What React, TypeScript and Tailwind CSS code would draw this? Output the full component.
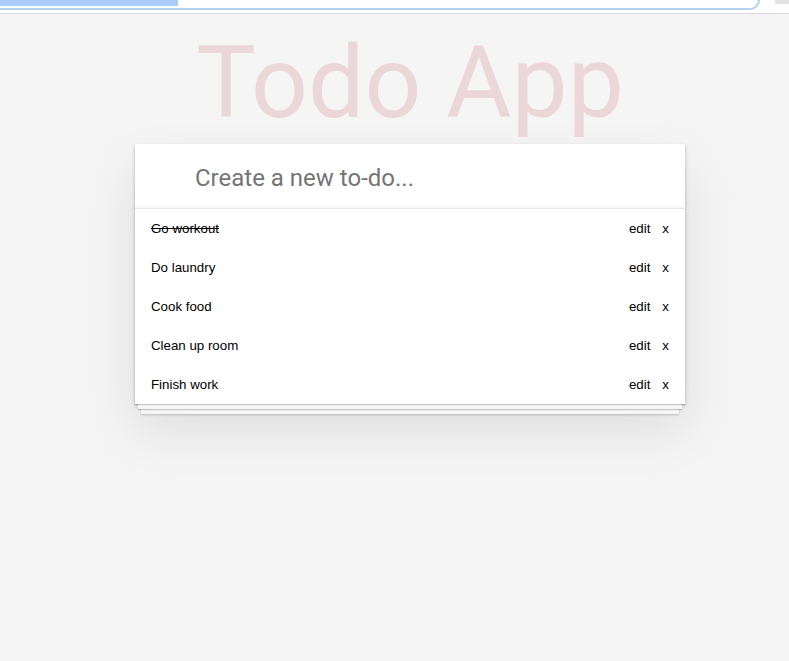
import { useState } from 'react';

interface Todo {
  id: number;
  title: string;
  done: boolean;
}

const initialTodos: Todo[] = [
  { id: 1, title: 'Go workout', done: true },
  { id: 2, title: 'Do laundry', done: false },
  { id: 3, title: 'Cook food', done: false },
  { id: 4, title: 'Clean up room', done: false },
  { id: 5, title: 'Finish work', done: false },
];

function BrowserStrip() {
  return (
    <div className="relative h-[14px] bg-white border-b border-[#d9d9d9]">
      <div className="w-[760px] h-[10px] border-b-2 border-r-2 border-[#b3cff3] rounded-br-[10px]">
        <div className="w-[178px] h-[6px] bg-[#abcbf8]" />
      </div>
      <div className="absolute right-0 top-0 w-[14px] h-[4px] bg-[#e3e3e3]" />
    </div>
  );
}

function TodoRow({ todo, onToggle, onRemove }: { todo: Todo; onToggle: () => void; onRemove: () => void }) {
  return (
    <li className="flex items-center h-[39px] pl-4 pr-[16px] text-[13.3px] text-black">
      <span
        onClick={onToggle}
        className={`flex-1 cursor-pointer ${todo.done ? 'line-through' : ''}`}
      >
        {todo.title}
      </span>
      <button className="cursor-pointer">edit</button>
      <button onClick={onRemove} className="ml-[12px] cursor-pointer">x</button>
    </li>
  );
}

export default function App() {
  const [todos, setTodos] = useState<Todo[]>(initialTodos);
  const [text, setText] = useState('');

  const addTodo = () => {
    const title = text.trim();
    if (!title) return;
    setTodos([...todos, { id: Date.now(), title, done: false }]);
    setText('');
  };

  return (
    <div className="min-h-screen bg-[#f5f5f5]" style={{ fontFamily: '"Liberation Sans", Arial, sans-serif' }}>
      <BrowserStrip />
      <div className="ml-[135px] w-[550px]">
        <h1
          className="mt-[19px] h-[100px] text-center text-[100px] leading-[100px] font-normal text-[#ebd7d7]"
          style={{ fontFamily: 'Roboto, sans-serif' }}
        >
          Todo App
        </h1>
        <div className="mt-[11px] bg-white shadow-[0_1px_1px_rgba(0,0,0,0.2),0_8px_0_-3px_#f6f6f6,0_9px_1px_-3px_rgba(0,0,0,0.2),0_16px_0_-6px_#f6f6f6,0_17px_2px_-6px_rgba(0,0,0,0.2),0_2px_4px_0_rgba(0,0,0,0.2),0_25px_50px_0_rgba(0,0,0,0.1)]">
          <input
            value={text}
            onChange={(e) => setText(e.target.value)}
            onKeyDown={(e) => { if (e.key === 'Enter') addTodo(); }}
            placeholder="Create a new to-do..."
            className="block w-full h-[64px] pt-[3px] pl-[60px] pr-4 text-[24px] text-[#4d4d4d] placeholder:text-[#757575] outline-none bg-transparent shadow-[inset_0_-2px_1px_rgba(0,0,0,0.03)]"
            style={{ fontFamily: 'Roboto, sans-serif' }}
          />
          <ul className="border-t border-[#e6e6e6]">
            {todos.map((t) => (
              <TodoRow
                key={t.id}
                todo={t}
                onToggle={() => setTodos(todos.map((x) => (x.id === t.id ? { ...x, done: !x.done } : x)))}
                onRemove={() => setTodos(todos.filter((x) => x.id !== t.id))}
              />
            ))}
          </ul>
        </div>
      </div>
    </div>
  );
}
